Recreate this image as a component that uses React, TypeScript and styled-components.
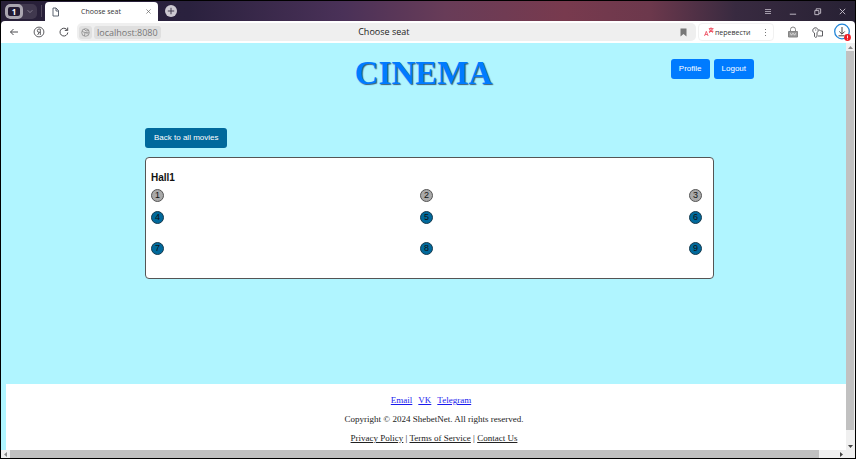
import React from "react";
import styled, { createGlobalStyle } from "styled-components";

const Global = createGlobalStyle`
  * { box-sizing: border-box; }
  body { margin: 0; }
  button, input { font: inherit; }
  svg { display: block; flex: none; }
`;

const Window = styled.div`
  display: flex;
  flex-direction: column;
  height: 100vh;
  border: 1px solid #000;
  background: #272036;
  font-family: "Open Sans", "Noto Sans", sans-serif;
  overflow: hidden;
`;

const TabBar = styled.header`
  display: flex;
  align-items: center;
  height: 20px;
  flex: none;
  padding-left: 4px;
  background: linear-gradient(90deg, #282038 0%, #2a213e 22%, #4a3158 40%, #683c58 52%, #783a4e 66%, #6c384c 76%, #382a40 86%, #272134 100%);
`;

const IconButton = styled.button<{ $width?: number }>`
  display: flex;
  align-items: center;
  justify-content: center;
  width: ${(p) => p.$width ?? 25}px;
  height: 18px;
  flex: none;
  padding: 0;
  border: 0;
  background: transparent;
  color: #4c4c50;
`;

const TabGroup = styled.div`
  display: flex;
  align-items: center;
  width: 32px;
  height: 15px;
  border-radius: 5px;
  background: #40384e;
  overflow: hidden;
`;

const TabCount = styled.button`
  display: flex;
  align-items: center;
  justify-content: center;
  width: 18px;
  height: 15px;
  padding: 0;
  border: 3px solid #aaa6b0;
  border-radius: 5px;
  background: #241c34;
  color: #fff;
  font-size: 8px;
  font-weight: 700;
  line-height: 9px;
`;

const Divider = styled.span`
  width: 1px;
  height: 12px;
  margin: 0 3px 0 4px;
  background: #50485c;
`;

const Tab = styled.div`
  display: flex;
  align-items: center;
  align-self: flex-end;
  width: 113px;
  height: 19px;
  padding: 0 3px 0 6px;
  border-radius: 4px 4px 0 0;
  background: #fff;
  color: #333;
`;

const TabTitle = styled.span`
  flex: 1;
  text-align: center;
  font-size: 7px;
  line-height: 18px;
  white-space: nowrap;
`;

const NewTab = styled.button`
  display: flex;
  align-items: center;
  justify-content: center;
  width: 12px;
  height: 12px;
  margin-left: 7px;
  padding: 0;
  border: 0;
  border-radius: 50%;
  background: #cdc9d2;
  color: #40384e;
`;

const WindowControls = styled.div`
  display: flex;
  margin-left: auto;
`;

const Toolbar = styled.nav`
  display: flex;
  align-items: center;
  height: 22px;
  flex: none;
  border-radius: 4px 4px 0 0;
  background: #fff;
`;

const AddressBar = styled.div`
  display: flex;
  align-items: center;
  flex: 1;
  height: 18px;
  margin-left: 1px;
  border-radius: 5px;
  background: #efefef;
`;

const SiteIcon = styled.span`
  display: flex;
  align-items: center;
  justify-content: center;
  width: 13px;
  height: 13px;
  margin: 0 2px;
  border-radius: 3px;
  background: #e0e0e0;
  color: #8c8c8c;
`;

const Host = styled.span`
  padding: 0 3px;
  border-radius: 3px;
  background: #dfdfdf;
  color: #777;
  font-size: 9px;
  line-height: 13px;
`;

const PageTitle = styled.span`
  flex: 1;
  padding-right: 64px;
  text-align: center;
  color: #222;
  font-size: 9px;
  line-height: 18px;
`;

const Translate = styled.div`
  display: flex;
  align-items: center;
  width: 76px;
  height: 18px;
  margin: 0 7px 0 2px;
  padding-left: 5px;
  border: 1px solid #f1f1f1;
  border-radius: 4px;
  color: #333;
  font-size: 7px;
  white-space: nowrap;
`;

const TranslateLabel = styled.span`
  flex: 1;
  padding-left: 1px;
`;

const Viewport = styled.div`
  display: grid;
  flex: 1;
  min-height: 0;
  grid-template-columns: 1fr 9px;
  grid-template-rows: 1fr 8px;
  background: #f0f0f0;
`;

const Page = styled.div`
  display: flex;
  flex-direction: column;
  min-width: 0;
  background: #b0f5ff;
  font-family: "Liberation Serif", serif;
`;

const PageHeader = styled.div`
  display: grid;
  grid-template-columns: 1fr auto 1fr;
  align-items: start;
  padding: 11px 92px 0;
`;

const Brand = styled.h1`
  grid-column: 2;
  margin: 0;
  color: #007bff;
  font-size: 33px;
  line-height: 38px;
  text-shadow: 1px 1px 1px #3c6078;
`;

const Account = styled.div`
  display: flex;
  justify-content: flex-end;
  gap: 4px;
  padding-top: 5px;
`;

const Button = styled.button<{ $tone?: "bright" | "deep" }>`
  height: 20px;
  padding: 0 ${(p) => (p.$tone === "deep" ? 9 : 8)}px;
  border: 0;
  border-radius: 3px;
  background: ${(p) => (p.$tone === "deep" ? "#00699c" : "#007bff")};
  color: #fff;
  font-family: "Liberation Sans", Arial, sans-serif;
  font-size: 8px;
  line-height: 20px;
`;

const Main = styled.main`
  display: flex;
  flex-direction: column;
  align-items: flex-start;
  flex: 1;
  padding: 36px 132px 0 144px;
  font-family: "Liberation Sans", Arial, sans-serif;
`;

const Hall = styled.section`
  align-self: stretch;
  margin-top: 9px;
  padding: 14px 11px 23px 5px;
  border: 1px solid #555;
  border-radius: 4px;
  background: #fff;
`;

const HallName = styled.h2`
  margin: 0;
  color: #111;
  font-size: 10px;
  line-height: 12px;
`;

const SeatRow = styled.div<{ $gap: number }>`
  display: flex;
  justify-content: space-between;
  margin-top: ${(p) => p.$gap}px;
`;

const Seat = styled.button<{ $taken: boolean }>`
  width: 13px;
  height: 13px;
  padding: 0;
  border: 1px solid ${(p) => (p.$taken ? "#555" : "#16394c")};
  border-radius: 50%;
  background: ${(p) => (p.$taken ? "#a9a9a9" : "#00699c")};
  color: #111;
  font-size: 9px;
  line-height: 11px;
  text-align: center;
`;

const Footer = styled.footer`
  margin-left: 5px;
  padding: 11px 0 7px 16px;
  background: #fff;
  color: #222;
  text-align: center;
  font-size: 9px;
  line-height: 10px;
`;

const FooterLine = styled.p`
  margin: 0 0 9px;
  &:last-child { margin-bottom: 0; }
`;

const Social = styled.a`
  margin-right: 6px;
  color: #1a1aee;
`;

const Legal = styled.a`
  color: #222;
`;

const Scrollbar = styled.div<{ $vertical?: boolean }>`
  display: flex;
  flex-direction: ${(p) => (p.$vertical ? "column" : "row")};
  background: #f0f0f0;
`;

const ScrollEnd = styled.button`
  display: flex;
  align-items: center;
  justify-content: center;
  width: 9px;
  height: 8px;
  flex: none;
  padding: 0;
  border: 0;
  background: transparent;
  color: #333;
`;

const Thumb = styled.div<{ $share: number }>`
  flex: ${(p) => p.$share};
  margin: 0 1px 0 0;
  background: #c1c1c1;
`;

const Rest = styled.div<{ $share: number }>`
  flex: ${(p) => p.$share};
`;

const rows = [
  { gap: 5, seats: [1, 2, 3], taken: true },
  { gap: 9, seats: [4, 5, 6], taken: false },
  { gap: 18, seats: [7, 8, 9], taken: false },
];

type LineProps = { d: string; size?: number; width?: number; color?: string };

const Line = ({ d, size = 10, width = 1, color = "currentColor" }: LineProps) => (
  <svg width={size} height={size} viewBox="0 0 10 10" fill="none" stroke={color} strokeWidth={width} aria-hidden="true">
    <path d={d} />
  </svg>
);

const Arrow = ({ d, color = "#444" }: { d: string; color?: string }) => (
  <svg width="5" height="5" viewBox="0 0 5 5" fill={color} aria-hidden="true">
    <path d={d} />
  </svg>
);

export default function App() {
  return (
    <Window>
      <Global />
      <TabBar>
        <TabGroup>
          <TabCount aria-label="Open tabs">1</TabCount>
          <IconButton $width={14} aria-label="Tab list">
            <Line d="M2 4l3 3 3-3" size={8} color="#908a9a" />
          </IconButton>
        </TabGroup>
        <Divider />
        <Tab>
          <svg width="9" height="10" viewBox="0 0 9 10" fill="none" stroke="#4d5662" strokeWidth="0.9" aria-hidden="true">
            <path d="M2 1h3l2.500 2.500V9H2zM5 1v3h2.500" />
          </svg>
          <TabTitle>Choose seat</TabTitle>
          <IconButton $width={13} aria-label="Close tab">
            <Line d="M2 2l6 6M8 2l-6 6" size={7} color="#666" />
          </IconButton>
        </Tab>
        <NewTab aria-label="New tab">
          <Line d="M5 1v8M1 5h8" size={8} width={1.2} />
        </NewTab>
        <WindowControls>
          <IconButton aria-label="Menu">
            <svg width="6" height="7" viewBox="0 0 6 7" fill="#a49cab" aria-hidden="true">
              <path d="M0 1h6v1H0zM0 3h6v1H0zM0 5h6v1H0z" />
            </svg>
          </IconButton>
          <IconButton aria-label="Minimize">
            <Line d="M2 8h7" size={9} color="#c9c4cf" />
          </IconButton>
          <IconButton aria-label="Restore">
            <Line d="M2 4h4.500v4.500H2zM3.500 4V2H8.500v5H6.500" size={9} color="#c9c4cf" />
          </IconButton>
          <IconButton aria-label="Close">
            <Line d="M2 2l6 6M8 2l-6 6" size={9} color="#c9c4cf" />
          </IconButton>
        </WindowControls>
      </TabBar>

      <Toolbar>
        <IconButton aria-label="Back">
          <Line d="M9 5H1.500M4.500 2l-3 3 3 3" />
        </IconButton>
        <IconButton aria-label="Yandex">
          <svg width="12" height="12" viewBox="0 0 12 12" fill="none" stroke="currentColor" strokeWidth="0.9" aria-hidden="true">
            <circle cx="6" cy="6" r="4.900" />
            <path d="M7.300 9V3H6a1.600 1.600 0 0 0 0 3.300h1.300M6.200 6.300L4.600 9" />
          </svg>
        </IconButton>
        <IconButton aria-label="Reload">
          <Line d="M8.800 5.500a3.900 3.900 0 1 1-1.300-3.300L8.600 3.300M8.700.5v2.900H5.800" />
        </IconButton>
        <AddressBar>
          <SiteIcon>
            <svg width="9" height="9" viewBox="0 0 9 9" fill="none" stroke="currentColor" strokeWidth="0.8" aria-hidden="true">
              <circle cx="4.500" cy="4.500" r="3.800" />
              <path d="M1 3.500l3 1L3.500 8M3 1l2 2 3-.5M5 4.500l2 2M4 4.500l4 .3" />
            </svg>
          </SiteIcon>
          <Host>localhost:8080</Host>
          <PageTitle>Choose seat</PageTitle>
          <IconButton aria-label="Bookmark">
            <svg width="7" height="9" viewBox="0 0 7 9" fill="#777" aria-hidden="true">
              <path d="M.5.5h6v8l-3-2.500-3 2.500z" />
            </svg>
          </IconButton>
        </AddressBar>
        <Translate>
          <svg width="10" height="10" viewBox="0 0 10 10" fill="none" stroke="#ed4558" strokeWidth="0.8" aria-hidden="true">
            <path d="M.5 9L2.300 4.300 4.100 9M1.100 7.500h2.400M4.800 1.500h4.700M7 .3v1.200M5.200 3h4M5.200 6L8.500 1.800M5.300 2.300l3.700 3.400M4.900 4.500h4.500" />
          </svg>
          <TranslateLabel>перевести</TranslateLabel>
          <IconButton $width={15} aria-label="Translation options">
            <svg width="3" height="9" viewBox="0 0 3 9" fill="#777" aria-hidden="true">
              <path d="M1 1h1v1H1zM1 4h1v1H1zM1 7h1v1H1z" />
            </svg>
          </IconButton>
        </Translate>
        <IconButton $width={24} aria-label="Protect">
          <svg width="10" height="12" viewBox="0 0 10 12" fill="none" stroke="#858585" aria-hidden="true">
            <path d="M2.500 5.500V3.500a2.500 2.500 0 0 1 5 0V5.500" />
            <path d="M.5 5.500h9V11H.5z" fill="#999" />
            <path d="M2 7.500l1.500 1.200L5 7.500l1.500 1.200L8 7.500" stroke="#eee" strokeWidth="0.9" />
          </svg>
        </IconButton>
        <IconButton $width={24} aria-label="Passwords">
          <svg width="11" height="11" viewBox="0 0 11 11" fill="none" stroke="currentColor" strokeWidth="0.9" aria-hidden="true">
            <path d="M2.500 6A2.700 2.700 0 1 1 5 5.700V9.500L3.800 10.500 2.500 9.500zM6.500 3h1.300l.7 1h2v5H6M3.700 2.500v1" />
          </svg>
        </IconButton>
        <IconButton $width={26} aria-label="Downloads">
          <svg width="18" height="18" viewBox="0 0 18 18" fill="none" aria-hidden="true">
            <circle cx="9" cy="8.500" r="7.300" stroke="#2386d8" strokeWidth="1.300" />
            <path d="M9 4v7M6.300 8.500L9 11.200l2.700-2.700M5.500 12.800h6" stroke="#444" />
            <circle cx="14.500" cy="14.500" r="3.400" fill="#ee1c25" />
            <path d="M14.500 12.500v2.500M14.500 15.700v.8" stroke="#fff" strokeWidth="0.9" />
          </svg>
        </IconButton>
      </Toolbar>

      <Viewport>
        <Page>
          <PageHeader>
            <Brand>CINEMA</Brand>
            <Account>
              <Button>Profile</Button>
              <Button>Logout</Button>
            </Account>
          </PageHeader>
          <Main>
            <Button $tone="deep">Back to all movies</Button>
            <Hall>
              <HallName>Hall1</HallName>
              {rows.map((row) => (
                <SeatRow key={row.seats[0]} $gap={row.gap}>
                  {row.seats.map((n) => (
                    <Seat key={n} $taken={row.taken} aria-label={`Seat ${n}`}>{n}</Seat>
                  ))}
                </SeatRow>
              ))}
            </Hall>
          </Main>
          <Footer>
            <FooterLine>
              <Social href="#email">Email</Social>
              <Social href="#vk">VK</Social>
              <Social href="#telegram">Telegram</Social>
            </FooterLine>
            <FooterLine>Copyright © 2024 ShebetNet. All rights reserved.</FooterLine>
            <FooterLine>
              <Legal href="#privacy">Privacy Policy</Legal> | <Legal href="#terms">Terms of Service</Legal> |{" "}
              <Legal href="#contact">Contact Us</Legal>
            </FooterLine>
          </Footer>
        </Page>
        <Scrollbar $vertical>
          <ScrollEnd aria-label="Scroll up"><Arrow d="M0 4l2.500-3L5 4z" color="#888" /></ScrollEnd>
          <Thumb $share={378} />
          <Rest $share={12} />
          <ScrollEnd aria-label="Scroll down"><Arrow d="M0 1l2.500 3L5 1z" /></ScrollEnd>
        </Scrollbar>
        <Scrollbar>
          <ScrollEnd aria-label="Scroll left"><Arrow d="M4 0L1 2.500 4 5z" color="#888" /></ScrollEnd>
          <Thumb $share={809} />
          <Rest $share={17} />
          <ScrollEnd aria-label="Scroll right"><Arrow d="M1 0l3 2.500L1 5z" /></ScrollEnd>
        </Scrollbar>
      </Viewport>
    </Window>
  );
}
